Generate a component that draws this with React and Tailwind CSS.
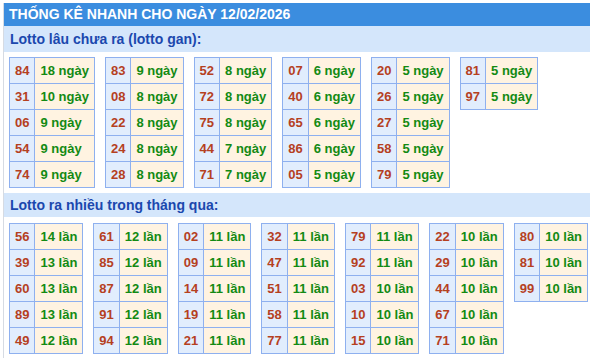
import React from "react";

const ganTables = [
  [["84", 18], ["31", 10], ["06", 9], ["54", 9], ["74", 9]],
  [["83", 9], ["08", 8], ["22", 8], ["24", 8], ["28", 8]],
  [["52", 8], ["72", 8], ["75", 8], ["44", 7], ["71", 7]],
  [["07", 6], ["40", 6], ["65", 6], ["86", 6], ["05", 5]],
  [["20", 5], ["26", 5], ["27", 5], ["58", 5], ["79", 5]],
  [["81", 5], ["97", 5]],
];

const hotTables = [
  [["56", 14], ["39", 13], ["60", 13], ["89", 13], ["49", 12]],
  [["61", 12], ["85", 12], ["87", 12], ["91", 12], ["94", 12]],
  [["02", 11], ["09", 11], ["14", 11], ["19", 11], ["21", 11]],
  [["32", 11], ["47", 11], ["51", 11], ["58", 11], ["77", 11]],
  [["79", 11], ["92", 11], ["03", 10], ["10", 10], ["15", 10]],
  [["22", 10], ["29", 10], ["44", 10], ["67", 10], ["71", 10]],
  [["80", 10], ["81", 10], ["99", 10]],
];

const StatTable = ({ rows, unit }) => (
  <table className="shrink-0 border-collapse whitespace-nowrap">
    <tbody>
      {rows.map(([num, count]) => (
        <tr key={num}>
          <td className="h-[26px] border border-[#8eb0ef] bg-[#e1edfd] px-[5px] text-center text-[#b5401f]">
            {num}
          </td>
          <td className="h-[26px] border border-[#8eb0ef] bg-[#fff3e1] px-[5px] text-left text-[#138a13]">
            {count} {unit}
          </td>
        </tr>
      ))}
    </tbody>
  </table>
);

const SectionTitle = ({ children, className }) => (
  <div className={"flex items-center bg-[#d4e6fb] px-[6px] text-[14px] font-bold text-[#1b48ae] " + className}>
    {children}
  </div>
);

export default function App() {
  return (
    <div className="h-[358px] w-[590px] overflow-hidden bg-white pt-[3px] pl-[3px] font-['Liberation_Sans',Arial,sans-serif]">
      <div className="h-full border-l border-[#d6dbe3]">
        <div className="flex h-[23px] items-center bg-[#3b8ddf] px-[5px] text-[14px] font-bold text-white">
          THỐNG KÊ NHANH CHO NGÀY 12/02/2026
        </div>

        <SectionTitle className="h-[26px]">Lotto lâu chưa ra (lotto gan):</SectionTitle>
        <div className="flex items-start gap-[10px] px-[5px] pt-[5px] text-[13px] font-bold">
          {ganTables.map((rows, i) => (
            <StatTable key={i} rows={rows} unit="ngày" />
          ))}
        </div>

        <SectionTitle className="mt-[5px] h-[24px]">Lotto ra nhiều trong tháng qua:</SectionTitle>
        <div className="flex items-start gap-[10px] px-[5px] pt-[6px] text-[13px] font-bold">
          {hotTables.map((rows, i) => (
            <StatTable key={i} rows={rows} unit="lần" />
          ))}
        </div>
      </div>
    </div>
  );
}
